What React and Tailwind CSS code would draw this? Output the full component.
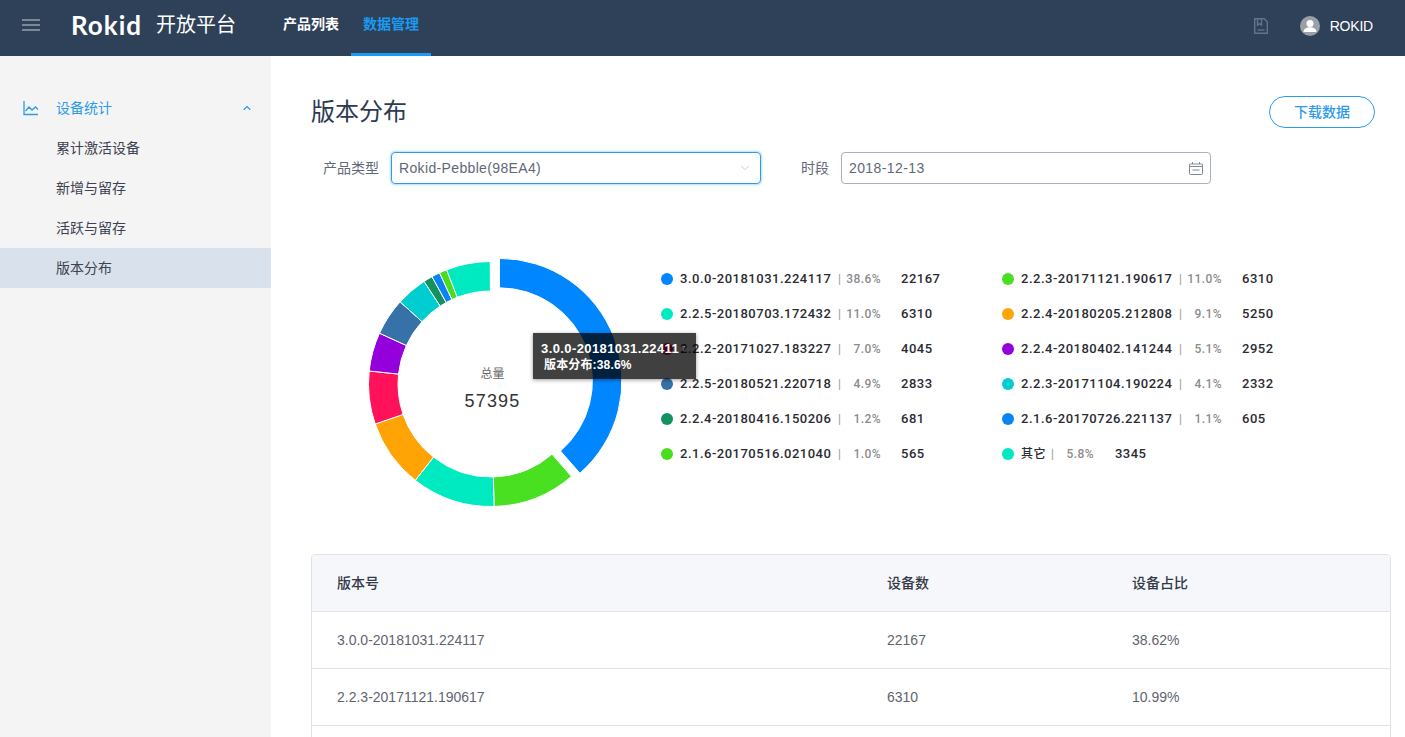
import { ChevronUp, ChevronDown } from 'lucide-react';

const CX = 140;
const CY = 140;
const OUTER = 122.5;
const INNER = 93;

const slices = [
  { name: '3.0.0-20181031.224117', pct: 38.6, value: 22167, color: '#0086ff', offset: 9 },
  { name: '2.2.3-20171121.190617', pct: 11.0, value: 6310, color: '#48e020' },
  { name: '2.2.5-20180703.172432', pct: 11.0, value: 6310, color: '#00eac2' },
  { name: '2.2.4-20180205.212808', pct: 9.1, value: 5250, color: '#ffa404' },
  { name: '2.2.2-20171027.183227', pct: 7.0, value: 4045, color: '#ff1259' },
  { name: '2.2.4-20180402.141244', pct: 5.1, value: 2952, color: '#9400dc' },
  { name: '2.2.5-20180521.220718', pct: 4.9, value: 2833, color: '#3672a8' },
  { name: '2.2.3-20171104.190224', pct: 4.1, value: 2332, color: '#00cdd0' },
  { name: '2.2.4-20180416.150206', pct: 1.2, value: 681, color: '#13925f' },
  { name: '2.1.6-20170726.221137', pct: 1.1, value: 605, color: '#0a84f5' },
  { name: '2.1.6-20170516.021040', pct: 1.0, value: 565, color: '#4bdc1e' },
  { name: '其它', pct: 5.8, value: 3345, color: '#00eac2' },
];

const leftLegend = [0, 2, 4, 6, 8, 10].map((i) => slices[i]);
const rightLegend = [1, 3, 5, 7, 9].map((i) => slices[i]);

function polar(r, turn) {
  const a = turn * Math.PI * 2;
  return [Math.sin(a) * r, -Math.cos(a) * r];
}

function slicePath(start, end, offset = 0) {
  const [dx, dy] = polar(offset, (start + end) / 2);
  const [x1, y1] = polar(OUTER, start);
  const [x2, y2] = polar(OUTER, end);
  const [x3, y3] = polar(INNER, end);
  const [x4, y4] = polar(INNER, start);
  const ox = CX + dx;
  const oy = CY + dy;
  const large = end - start > 0.5 ? 1 : 0;
  return `M${ox + x1} ${oy + y1}A${OUTER} ${OUTER} 0 ${large} 1 ${ox + x2} ${oy + y2}L${ox + x3} ${oy + y3}A${INNER} ${INNER} 0 ${large} 0 ${ox + x4} ${oy + y4}Z`;
}

function Donut() {
  let turn = 0;
  return (
    <svg width="280" height="280" viewBox="0 0 280 280" className="block">
      {slices.map((s) => {
        const start = turn;
        turn += s.pct / 100;
        return <path key={s.name} d={slicePath(start, turn, s.offset)} fill={s.color} stroke="#fff" strokeWidth="1" />;
      })}
    </svg>
  );
}

function LegendRow({ item }) {
  return (
    <div className="flex h-[35px] items-center text-[13px] font-medium tracking-[0.5px] text-[#2b2b33] font-['Roboto','Noto_Sans_CJK_SC',sans-serif]">
      <span className="h-3 w-3 rounded-full" style={{ backgroundColor: item.color }} />
      <span className="ml-[7px] w-[158px] whitespace-nowrap">{item.name}</span>
      <span className="w-1 text-[12px] font-normal text-[#999]">|</span>
      <span className="w-[39px] text-right text-[12px] tracking-[0.4px] text-[#8c8c8c]">{item.pct.toFixed(1)}%</span>
      <span className="ml-5 tracking-[0.5px]">{item.value}</span>
    </div>
  );
}

function OtherRow({ item }) {
  return (
    <div className="flex h-[35px] items-center text-[13px] font-medium tracking-[0.5px] text-[#2b2b33] font-['Roboto','Noto_Sans_CJK_SC',sans-serif]">
      <span className="h-3 w-3 rounded-full" style={{ backgroundColor: item.color }} />
      <span className="ml-[7px] whitespace-nowrap text-[12px]">{item.name}</span>
      <span className="ml-[5px] text-[12px] font-normal text-[#999]">|</span>
      <span className="ml-3 text-[12px] tracking-[0.4px] text-[#8c8c8c]">{item.pct.toFixed(1)}%</span>
      <span className="ml-[21px]">{item.value}</span>
    </div>
  );
}

function TrendIcon() {
  return (
    <svg width="16" height="16" viewBox="0 0 16 16" fill="none" stroke="#2d9bea" strokeWidth="1.3">
      <path d="M1 1v13.500h14" />
      <path d="M2.500 11l3.500-4 3 3 3.500-3 2.500 2.500" />
    </svg>
  );
}

function BookIcon() {
  return (
    <svg width="14" height="16" viewBox="0 0 14 16" fill="none" stroke="#63738a" strokeWidth="1.4">
      <path d="M0.700 0.700h9.500l3.100 3.100v11.500h-12.600z" />
      <path d="M3.500 0.700v6.500l2-1.500 2 1.500v-6.500" />
      <path d="M3.500 12h7" />
    </svg>
  );
}

function AvatarIcon() {
  return (
    <svg width="20" height="20" viewBox="0 0 20 20">
      <circle cx="10" cy="10" r="10" fill="#9a9fa8" />
      <circle cx="10" cy="7.500" r="3.500" fill="#fff" />
      <path d="M3.500 16c0-3.300 3-4.800 6.500-4.800s6.500 1.500 6.500 4.800z" fill="#fff" />
    </svg>
  );
}

function CalendarIcon() {
  return (
    <svg width="14" height="13" viewBox="0 0 14 13" fill="none" stroke="#7d8798" strokeWidth="1">
      <rect x="0.500" y="2" width="13" height="10.500" rx="1" />
      <path d="M0.500 4.500h13M3.500 0v2M10.500 0v2M3.500 8h7" />
    </svg>
  );
}

function Header() {
  return (
    <header className="flex h-14 shrink-0 items-stretch bg-[#2f4059] text-white">
      <div className="flex w-[271px] items-center pb-[6px]">
        <div className="ml-[22px] flex w-[18px] flex-col gap-[3px]">
          <span className="h-[2px] bg-[#7b8899]" />
          <span className="h-[2px] bg-[#7b8899]" />
          <span className="h-[2px] bg-[#7b8899]" />
        </div>
        <span className="ml-[31px] w-[70px] text-[26px] font-bold leading-none tracking-[1px] font-['Lato',sans-serif]">Rokid</span>
        <span className="ml-[15px] whitespace-nowrap text-[20px] leading-none">开放平台</span>
      </div>
      <nav className="flex">
        <a className="flex w-20 justify-center pt-[14px] text-sm font-bold">产品列表</a>
        <a className="flex w-20 justify-center border-b-[3px] border-[#1a9bf0] pt-[14px] text-sm font-bold text-[#1a9bf0]">数据管理</a>
      </nav>
      <div className="ml-auto flex items-center pb-1 pr-8">
        <BookIcon />
        <span className="ml-[32px]"><AvatarIcon /></span>
        <span className="ml-[10px] text-sm tracking-[-0.2px]">ROKID</span>
      </div>
    </header>
  );
}

function Sidebar() {
  return (
    <aside className="w-[271px] shrink-0 bg-[#f4f4f5] pt-8 text-sm text-[#3c4250]">
      <div className="flex h-10 items-center pl-[23px] pr-[18px] text-[#2d9bea]">
        <TrendIcon />
        <span className="ml-[17px]">设备统计</span>
        <ChevronUp size={12} strokeWidth={2.2} className="ml-auto" />
      </div>
      <div className="flex h-10 items-center pl-14">累计激活设备</div>
      <div className="flex h-10 items-center pl-14">新增与留存</div>
      <div className="flex h-10 items-center pl-14">活跃与留存</div>
      <div className="flex h-10 items-center bg-[#d9e1ec] pl-14">版本分布</div>
    </aside>
  );
}

function Filters() {
  return (
    <div className="mt-[8px] flex items-center text-sm text-[#5f6877]">
      <label className="ml-3 w-[68px]">产品类型</label>
      <div className="flex h-8 w-[370px] items-center justify-between rounded border border-[#2d9bea] pl-[7px] pr-[8px] shadow-[0_0_3px_#5cc3f5]">
        <span className="tracking-[0.35px]">Rokid-Pebble(98EA4)</span>
        <ChevronDown size={14} strokeWidth={1.5} className="text-[#c4c9d2]" />
      </div>
      <label className="ml-10 w-10">时段</label>
      <div className="flex h-8 w-[370px] items-center justify-between rounded border border-[#a7b0c0] pl-[7px] pr-[7px]">
        <span className="tracking-[0.4px]">2018-12-13</span>
        <CalendarIcon />
      </div>
    </div>
  );
}

function Chart() {
  return (
    <section className="relative ml-10 mt-[60px] flex h-[280px]">
      <div className="relative h-[280px] w-[280px]">
        <Donut />
        <div className="absolute inset-0 flex flex-col items-center pl-[3px] pt-[122px]">
          <span className="text-xs leading-4 text-[#666]">总量</span>
          <span className="mt-[9px] text-lg leading-5 tracking-[1.2px] text-[#333]">57395</span>
        </div>
      </div>
      <div className="ml-[30px] mt-[17px] flex">
        <div className="w-[341px]">
          {leftLegend.map((item) => <LegendRow key={item.name} item={item} />)}
        </div>
        <div>
          {rightLegend.map((item) => <LegendRow key={item.name} item={item} />)}
          <OtherRow item={slices[11]} />
        </div>
      </div>
      {/* hover tooltip of the first slice */}
      <div className="absolute left-[182px] top-[89px] z-10 h-[46px] w-[163px] overflow-hidden bg-[rgba(0,0,0,0.75)] pl-2 pt-[7px] text-[12px] font-bold leading-[17px] text-white shadow-[0_1px_4px_rgba(0,0,0,0.4)]">
        <div className="whitespace-nowrap text-[13px] tracking-[0.4px]">3.0.0-20181031.22411<span className="ml-[2px] align-top text-[8px] font-normal text-[#888]">7</span></div>
        <div className="whitespace-nowrap pl-[3px] tracking-[0.15px]">版本分布:38.6%</div>
      </div>
    </section>
  );
}

const tableRows = [
  ['3.0.0-20181031.224117', '22167', '38.62%'],
  ['2.2.3-20171121.190617', '6310', '10.99%'],
  ['', '', ''],
];

function VersionTable() {
  return (
    <div className="mt-[30px] rounded border border-[#e0e4ea] text-sm">
      <div className="grid h-[57px] grid-cols-[550px_245px_1fr] items-center rounded-t border-b border-[#dfe3ea] bg-[#f6f7fb] pl-[25px] font-medium text-[#333947]">
        <span>版本号</span>
        <span>设备数</span>
        <span>设备占比</span>
      </div>
      {tableRows.map((row, i) => (
        <div key={i} className="grid h-[57px] grid-cols-[550px_245px_1fr] items-center border-b border-[#dfe3ea] pl-[25px] text-[#5f6470]">
          {row.map((cell, j) => <span key={j}>{cell}</span>)}
        </div>
      ))}
    </div>
  );
}

export default function App() {
  return (
    <div className="flex h-screen flex-col overflow-hidden bg-white font-['Liberation_Sans','Noto_Sans_CJK_SC',sans-serif]">
      <Header />
      <div className="flex min-h-0 flex-1">
        <Sidebar />
        <main className="min-w-0 flex-1 overflow-hidden pl-10 pr-[14px] pt-10">
          <div className="flex h-12 items-start justify-between pr-4">
            <h1 className="text-2xl leading-[32px] text-[#2d3a50]">版本分布</h1>
            <button className="h-8 w-[106px] rounded-full border border-[#2d9bea] text-sm font-medium text-[#2d9bea]">下载数据</button>
          </div>
          <Filters />
          <Chart />
          <VersionTable />
        </main>
      </div>
    </div>
  );
}
